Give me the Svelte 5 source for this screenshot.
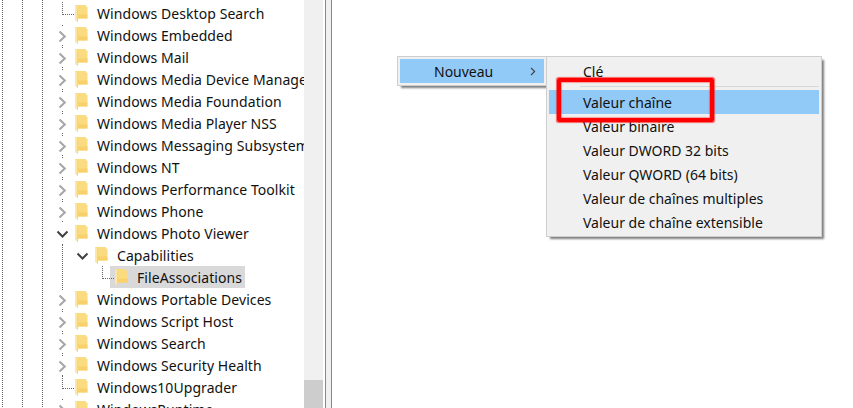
<script>
	const rows = [
		{ name: 'Windows Desktop Search', depth: 0, state: 'leaf' },
		{ name: 'Windows Embedded', depth: 0, state: 'closed' },
		{ name: 'Windows Mail', depth: 0, state: 'closed' },
		{ name: 'Windows Media Device Manager', depth: 0, state: 'closed' },
		{ name: 'Windows Media Foundation', depth: 0, state: 'closed' },
		{ name: 'Windows Media Player NSS', depth: 0, state: 'closed' },
		{ name: 'Windows Messaging Subsystem', depth: 0, state: 'closed' },
		{ name: 'Windows NT', depth: 0, state: 'closed' },
		{ name: 'Windows Performance Toolkit', depth: 0, state: 'closed' },
		{ name: 'Windows Phone', depth: 0, state: 'closed' },
		{ name: 'Windows Photo Viewer', depth: 0, state: 'open' },
		{ name: 'Capabilities', depth: 1, state: 'open' },
		{ name: 'FileAssociations', depth: 2, state: 'leaf', selected: true },
		{ name: 'Windows Portable Devices', depth: 0, state: 'closed' },
		{ name: 'Windows Script Host', depth: 0, state: 'closed' },
		{ name: 'Windows Search', depth: 0, state: 'closed' },
		{ name: 'Windows Security Health', depth: 0, state: 'closed' },
		{ name: 'Windows10Upgrader', depth: 0, state: 'leaf' },
		{ name: 'WindowsRuntime', depth: 0, state: 'closed' }
	]

	const submenu = [
		'Valeur chaîne',
		'Valeur binaire',
		'Valeur DWORD 32 bits',
		'Valeur QWORD (64 bits)',
		'Valeur de chaînes multiples',
		'Valeur de chaîne extensible'
	]
</script>

<div class="regedit">
	<div class="tree">
		{#each rows as row}
			<div class="row depth{row.depth}">
				<span class="twisty {row.state}">
					{#if row.state === 'closed'}
						<svg width="9" height="13" viewBox="0 0 9 13"><path d="M1.5 1.5 L6.8 6.5 L1.5 11.5" fill="none" stroke="#a6a6a6" stroke-width="2" /></svg>
					{:else if row.state === 'open'}
						<svg width="13" height="9" viewBox="0 0 13 9"><path d="M1.5 1.5 L6.5 6.5 L11.5 1.5" fill="none" stroke="#404040" stroke-width="2" /></svg>
					{:else}
						<span class="elbow"></span>
					{/if}
				</span>
				<svg class="folder" width="13" height="17" viewBox="0 0 13 17">
					<path d="M0 0 H11 V1.500 H12.500 V13.500 H3 V12 H0 Z" fill="#fadb80" />
					<path d="M3 9.500 H12.500 V13.500 H3 Z" fill="#f8d16a" />
					<path d="M0 0 L3 2 V17 L0 15 Z" fill="#fce7a5" />
					<path d="M2.500 1.700 L3 2 V17 L2.500 16.700 Z" fill="#e9c25e" />
				</svg>
				<span class="label" class:selected={row.selected}>{row.name}</span>
			</div>
		{/each}
		<span class="photo-guide"></span>
	</div>
	<div class="scrollbar"><div class="thumb"></div></div>
	<div class="splitter"></div>
	<div class="values"></div>

	<div class="menu parent">
		<div class="item active">
			<span>Nouveau</span>
			<svg width="6" height="9" viewBox="0 0 6 9"><path d="M1 .8 L4.600 4.500 L1 8.200" fill="none" stroke="#404040" stroke-width="1.200" /></svg>
		</div>
	</div>
	<div class="menu child">
		<div class="item">Clé</div>
		<div class="sep"></div>
		{#each submenu as label, i}
			<div class="item" class:active={i === 0}>{label}</div>
		{/each}
	</div>
	<div class="callout"></div>
</div>

<style>
	:global(body) {
		margin: 0;
		background: #fff;
	}
	.regedit {
		position: relative;
		display: flex;
		width: 853px;
		height: 408px;
		overflow: hidden;
		font-family: 'Noto Sans', sans-serif;
		font-size: 14px;
		color: #111;
	}
	.tree {
		position: relative;
		box-sizing: border-box;
		flex: 0 0 304px;
		height: 408px;
		padding-top: 2px;
		overflow: hidden;
		letter-spacing: 0.07px;
		background-image:
			repeating-linear-gradient(to bottom, #666 0 1px, transparent 1px 2px),
			repeating-linear-gradient(to bottom, #666 0 1px, transparent 1px 2px),
			repeating-linear-gradient(to bottom, #666 0 1px, transparent 1px 2px);
		background-size: 1px 100%;
		background-position: 2px 0, 22px 0, 42px 0;
		background-repeat: no-repeat;
	}
	.row {
		display: flex;
		align-items: center;
		height: 22px;
		padding-left: 55px;
		white-space: nowrap;
	}
	.depth1 {
		padding-left: 75px;
	}
	.depth2 {
		padding-left: 95px;
	}
	.twisty {
		position: relative;
		display: flex;
		align-items: center;
		justify-content: center;
		flex: 0 0 15px;
		height: 22px;
		margin-right: 5px;
	}
	.twisty svg {
		margin-top: 2px;
	}
	.twisty.closed::before,
	.twisty.closed::after {
		content: '';
		position: absolute;
		left: 7px;
		width: 1px;
		height: 1px;
		background: #666;
	}
	.twisty.closed::before {
		top: 1px;
	}
	.twisty.closed::after {
		bottom: 0;
	}
	.elbow {
		position: absolute;
		left: 7px;
		top: 0;
		width: 11px;
		height: 12px;
		border-left: 1px dotted #666;
		border-bottom: 1px dotted #666;
	}
	.folder {
		flex: none;
		margin-top: 1px;
	}
	.label {
		margin-left: 5px;
		padding: 1px 4px 0;
		height: 21px;
		line-height: 21px;
	}
	.label.selected {
		margin-left: -18px;
		padding: 1px 3px 0 27px;
		background: #d9d9d9;
		position: relative;
		z-index: -1;
	}
	.photo-guide {
		position: absolute;
		left: 62px;
		top: 244px;
		height: 44px;
		border-left: 1px dotted #666;
	}
	.scrollbar {
		display: flex;
		flex-direction: column;
		justify-content: flex-end;
		flex: 0 0 19px;
		background: #f0f0f0;
	}
	.thumb {
		height: 28px;
		background: #cdcdcd;
	}
	.splitter {
		flex: 0 0 5px;
		margin-left: 2px;
		border-left: 1px solid #838b91;
		border-right: 1px solid #838b91;
		background: #f0f0f0;
	}
	.values {
		flex: 1;
		background: #fff;
	}
	.menu {
		position: absolute;
		box-sizing: border-box;
		padding: 2px;
		border: 1px solid #cfcfcf;
		background: #f0f0f0;
		box-shadow: 3px 3px 2px -1px #7f7f7f;
	}
	.parent {
		left: 397px;
		top: 56px;
		width: 150px;
		height: 30px;
	}
	.child {
		left: 546px;
		top: 56px;
		width: 276px;
		height: 181px;
	}
	.item {
		display: flex;
		align-items: center;
		height: 24px;
		padding-left: 34px;
	}
	.parent .item {
		justify-content: space-between;
		padding-right: 8px;
	}
	.active {
		background: #91c9f7;
	}
	.sep {
		height: 1px;
		margin: 3px 0 3px 31px;
		background: #d7d7d7;
	}
	.callout {
		position: absolute;
		box-sizing: border-box;
		left: 557px;
		top: 78px;
		width: 157px;
		height: 44px;
		border: 4px solid #fe0000;
		border-radius: 2px;
		box-shadow: 0 0 1px 0.5px rgba(254, 0, 0, 0.6), inset 0 0 1px 0.5px rgba(254, 0, 0, 0.6);
	}
</style>
